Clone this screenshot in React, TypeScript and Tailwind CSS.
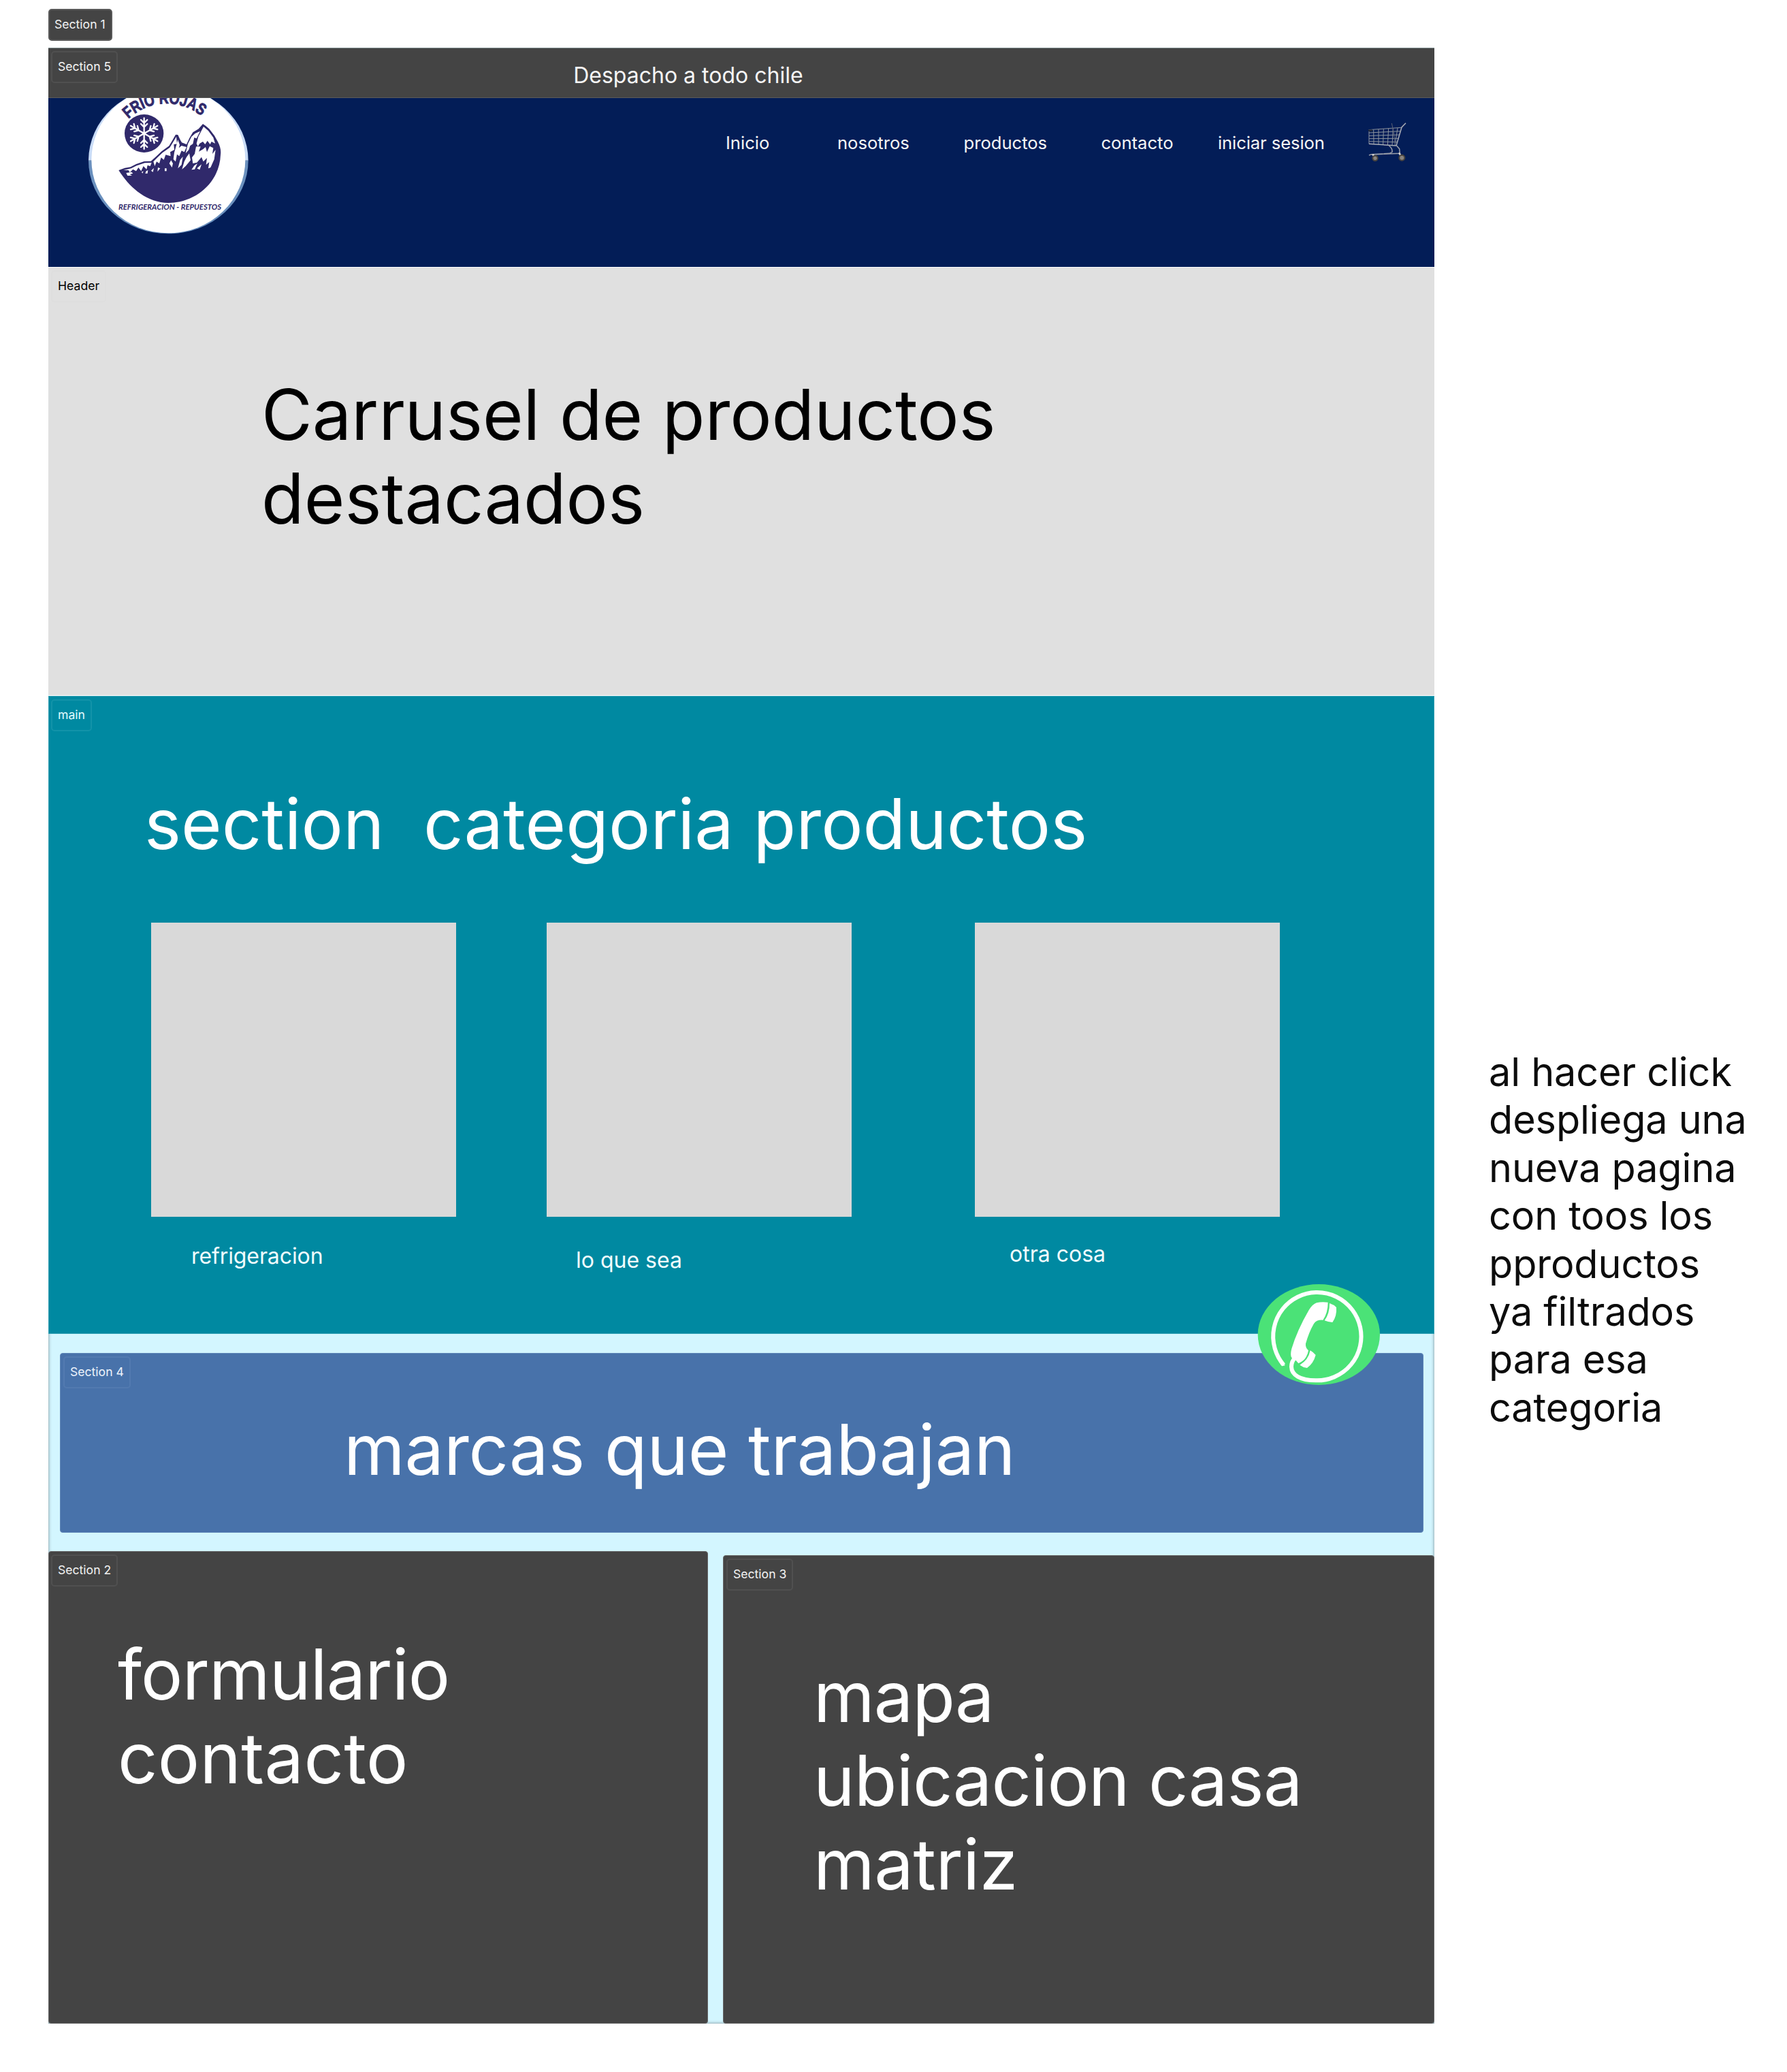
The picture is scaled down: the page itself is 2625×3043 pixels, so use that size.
import type { ReactNode } from "react";

const title = "whitespace-pre text-[102.4px] leading-[123.2px]";

function Chip({ children, className }: { children: ReactNode; className: string }) {
  return (
    <div className={`h-[47px] w-fit shrink-0 rounded-[5px] border-2 px-[8px] pt-[10px] text-[17.6px] leading-[22px] whitespace-nowrap ${className}`}>
      {children}
    </div>
  );
}

function Logo() {
  const arms = [0, 60, 120, 180, 240, 300];
  return (
    <svg className="ml-[49px] h-[210px] w-[260px] shrink-0" viewBox="0 12 780 630">
      <defs>
        <clipPath id="upper"><rect x="0" y="0" width="780" height="287" /></clipPath>
        <clipPath id="lower"><rect x="0" y="287" width="780" height="400" /></clipPath>
        <path id="arc" d="M206 104 A240 240 0 0 1 530 94" />
      </defs>
      <ellipse cx="382" cy="287" rx="352" ry="323" fill="#c8dbf6" clipPath="url(#upper)" />
      <ellipse cx="382" cy="287" rx="352" ry="323" fill="#6a90be" clipPath="url(#lower)" />
      <ellipse cx="382" cy="284" rx="339" ry="323" fill="#fff" />
      <text fill="#30296b" fontFamily="Liberation Sans" fontWeight="bold" fontSize="72" stroke="#30296b" strokeWidth="3">
        <textPath href="#arc" textLength="352" lengthAdjust="spacingAndGlyphs">FRIO ROJAS</textPath>
      </text>
      <ellipse cx="275" cy="168" rx="86" ry="84" fill="#30296b" />
      <g stroke="#fff" strokeWidth="7" fill="none" strokeLinecap="round">
        {arms.map((a) => (
          <path key={a} transform={`translate(275 168) rotate(${a})`} d="M0 0V-68M0 -28L-14 -42M0 -28L14 -42M0 -46L-14 -60M0 -46L14 -60" />
        ))}
      </g>
      <path
        fill="#30296b"
        d="M163 330L190 320L215 316L240 303L275 291L305 290L330 268L352 247L385 223L400 198L414 173L424 174L434 196L441 208L462 216L475 188L490 163L515 148L534 126L546 134L562 148L585 178L600 205Q616 235 612 262C608 385 500 474 382 474C285 472 210 405 163 330Z"
      />
      <g fill="#fff">
        <path d="M184 330L218 322L242 310L278 298L308 297L302 312L290 308L286 326L272 312L262 334L250 318L240 334L226 326L212 340L206 330Z" />
        <path d="M316 292L334 274L356 253L388 230L404 204L417 182L420 214L406 216L408 240L390 250L392 268L370 262L362 284L350 274L342 300L330 292L322 312Z" />
        <path d="M424 196L432 218L428 232L440 222L462 228L452 250L440 244L430 268L420 260L414 292L404 282L408 252Z" />
        <path d="M468 214L484 182L500 168L522 158L506 190L496 186L490 214L478 222L472 240L458 256Z" />
        <path d="M514 182L537 138L558 156L580 186L588 212L572 204L566 216L554 200L544 216L534 204L520 212L512 226L506 212Z" />
        <path d="M504 226L524 226L516 248L534 238L546 228L552 250L564 224L580 232L576 258L590 240L584 282L568 318L558 322L562 294L548 306L552 276L536 292L528 272L508 296L490 300L486 274L498 258Z" />
        <path d="M462 272L474 256L480 286L458 312L442 326L452 292ZM434 284L446 270L440 306L424 322ZM394 286L402 300L398 318L386 300ZM496 310L510 300L498 326L484 328ZM528 304L520 328L508 322Z" />
        <path d="M196 342L220 338L226 344L212 348L222 354L202 354ZM264 338L272 334L268 344ZM284 334L292 330L290 344L280 344ZM306 332L318 320L314 338ZM336 318L346 322L334 336ZM366 322H374V334H366Z" />
      </g>
      <text x="162" y="503" fill="#30296b" fontFamily="Lato" fontStyle="italic" fontWeight="bold" fontSize="31" textLength="453" lengthAdjust="spacingAndGlyphs">REFRIGERACION - REPUESTOS</text>
    </svg>
  );
}

function Cart() {
  return (
    <svg className="h-[120px] w-[144px] shrink-0" viewBox="108 12 432 360" fill="none">
      <g stroke="#8d929d" strokeWidth="3">
        <path d="M148 152L292 142M150 165L288 158M150 178L284 174M150 191L279 190M151 203L275 206M150 153V214M170 152L171 215M192 150L192 217M214 148L212 219M236 146L232 220M256 145L252 221M276 144L264 221" />
        <path d="M250 123L258 160L266 221" stroke="#5c6275" />
      </g>
      <path d="M150 214L270 222L294 141L312 122" stroke="#a9adb6" strokeWidth="4.5" />
      <path d="M147 151H165V159H147Z" fill="#1d2638" />
      <path d="M238 222Q254 234 252 250L240 256L160 260L150 264M272 222L284 236L286 256L160 261" stroke="#9a9ea9" strokeWidth="4.5" />
      <path d="M168 262L177 274M284 256L294 272" stroke="#d4d4d6" strokeWidth="8" strokeLinecap="round" />
      <circle cx="177" cy="277" r="11" fill="#8a8580" stroke="#49443f" strokeWidth="6" />
      <circle cx="295" cy="275" r="12" fill="#8a8580" stroke="#49443f" strokeWidth="6" />
    </svg>
  );
}

function CallButton() {
  return (
    <svg className="absolute top-[1885px] left-[1847px] h-[150px] w-[181px]" viewBox="141 75 543 450">
      <ellipse cx="412" cy="300" rx="269" ry="222" fill="#4be277" />
      <path d="M257 434A194 194 0 1 1 398 502C330 502 292 478 291 442C291 424 297 412 308 402" fill="none" stroke="#fff" strokeWidth="18" />
      <path d="M240 426L264 434Q256 440 246 436Z" fill="#fff" />
      <g fill="#fff">
        <path d="M452 158Q424 154 402 160Q384 166 368 192Q316 282 292 362Q286 384 290 398Q294 408 304 406L322 427Q346 416 356 398Q364 384 366 370Q352 358 354 340Q368 290 390 252Q402 234 430 236Q452 204 452 158Z" />
        <path d="M459 162Q478 168 489 180Q492 218 472 246Q456 246 437 238Q460 206 459 162Z" />
        <path d="M374 370Q388 378 398 390Q388 428 360 447Q344 446 328 434Q366 412 374 370Z" />
      </g>
    </svg>
  );
}

const links = [
  { label: "Inicio", width: "w-[164px]" },
  { label: "nosotros", width: "w-[185.5px]" },
  { label: "productos", width: "w-[202px]" },
  { label: "contacto", width: "w-[171.5px]" },
  { label: "iniciar sesion", width: "w-[207.5px] tracking-[-0.1px]" },
];

const categories = [
  { label: "refrigeracion", card: "", text: "pl-[59px] pt-[39px] tracking-[-0.1px]" },
  { label: "lo que sea", card: "ml-[133px]", text: "pl-[43px] pt-[45px]" },
  { label: "otra cosa", card: "ml-[181px]", text: "pl-[51px] pt-[36px]" },
];

export default function App() {
  return (
    <div className="relative flex h-[3043px] w-[2625px] items-start overflow-hidden bg-white font-['Inter',sans-serif] text-black">
      <div className="ml-[71px] w-[2036px] shrink-0">
        <Chip className="mt-[13px] w-[95px] border-[#5a5a5a] bg-[#444] pl-[7px] text-[#f2f2f2]">Section 1</Chip>

        <div className="mt-[10px] h-[2902px] bg-[#d3f6ff] shadow-[inset_0_0_5px_rgba(0,0,0,0.45)]">
          <section className="flex h-[74px] items-start border-t border-b border-t-[#7d8a8c] border-b-[#5a5a5a] bg-[#444] text-[#f5f5f5]">
            <Chip className="mt-[4px] ml-[4px] w-[97px] border-[#505050]">Section 5</Chip>
            <p className="mt-[20px] ml-[669px] text-[32px] leading-[39px] whitespace-nowrap">Despacho a todo chile</p>
          </section>

          <nav className="flex h-[248px] items-start bg-[#031d57] text-[#f5f5f5]">
            <Logo />
            <div className="ml-[686px] flex pt-[50px] text-[25.6px] leading-[31px] whitespace-nowrap">
              {links.map((l) => (
                <a key={l.label} className={`shrink-0 ${l.width}`}>{l.label}</a>
              ))}
            </div>
            <Cart />
          </nav>

          <header className="h-[630px] border-t border-b border-white bg-[#e0e0e0]">
            <Chip className="ml-[4px] translate-y-[4px] border-[#dedede]">Header</Chip>
            <h1 className={`mt-[108px] ml-[313px] ${title}`}>
              <span className="block tracking-[-0.1px]">Carrusel de productos</span>
              <span className="block">destacados</span>
            </h1>
          </header>

          <main className="h-[937px] border border-[#2f9fb3] bg-[#0089a1] text-white">
            <Chip className="ml-[3px] translate-y-[4px] border-[#1393a9] text-[#e3fbff]">main</Chip>
            <h2 className={`mt-[79px] ml-[140px] ${title}`}>{"section  categoria productos"}</h2>
            <div className="mt-[83px] ml-[150px] flex">
              {categories.map((c) => (
                <div key={c.label} className={`w-[448px] shrink-0 ${c.card}`}>
                  <div className="h-[432px] bg-[#d9d9d9]" />
                  <p className={`-mt-px text-[32px] leading-[39px] text-[#f2fdff] ${c.text}`}>{c.label}</p>
                </div>
              ))}
            </div>
          </main>

          <section className="mt-[28px] ml-[17px] h-[264px] w-[2003px] rounded-[4px] border border-[#5e86b8] bg-[#4872aa] text-white">
            <Chip className="ml-[4px] w-[97px] translate-y-[4px] border-[#527ab0] text-[#edf3fb]">Section 4</Chip>
            <p className={`mt-[33px] ml-[416px] tracking-[-0.14px] ${title}`}>marcas que trabajan</p>
          </section>

          <div className="mt-[27px] flex justify-between">
            <section className="h-[694px] w-[969px] rounded-[4px] border border-[#666] bg-[#444] text-white">
              <Chip className="ml-[3px] w-[97px] translate-y-[4px] border-[#505050] text-[#f2f2f2]">Section 2</Chip>
              <p className={`mt-[72px] ml-[101px] ${title}`}>
                <span className="block tracking-[-0.8px]">formulario</span>
                <span className="block tracking-[0.3px]">contacto</span>
              </p>
            </section>
            <section className="mt-[6px] h-[688px] w-[1045px] rounded-[4px] border border-[#666] bg-[#444] text-white">
              <Chip className="ml-[4px] w-[97px] translate-y-[4px] border-[#505050] text-[#f2f2f2]">Section 3</Chip>
              <p className={`mt-[99px] ml-[132px] ${title}`}>
                <span className="block tracking-[-1px]">mapa</span>
                <span className="block tracking-[-0.7px]">ubicacion casa</span>
                <span className="block tracking-[-0.4px]">matriz</span>
              </p>
            </section>
          </div>
        </div>
      </div>

      <aside className="mt-[1539px] ml-[80px] text-[57.6px] leading-[70.4px] tracking-[-0.12px] whitespace-pre text-[#0c0c0c]">
        {"al hacer click\ndespliega una\nnueva pagina\ncon toos los\npproductos\nya filtrados\npara esa\ncategoria"}
      </aside>

      <CallButton />
    </div>
  );
}
